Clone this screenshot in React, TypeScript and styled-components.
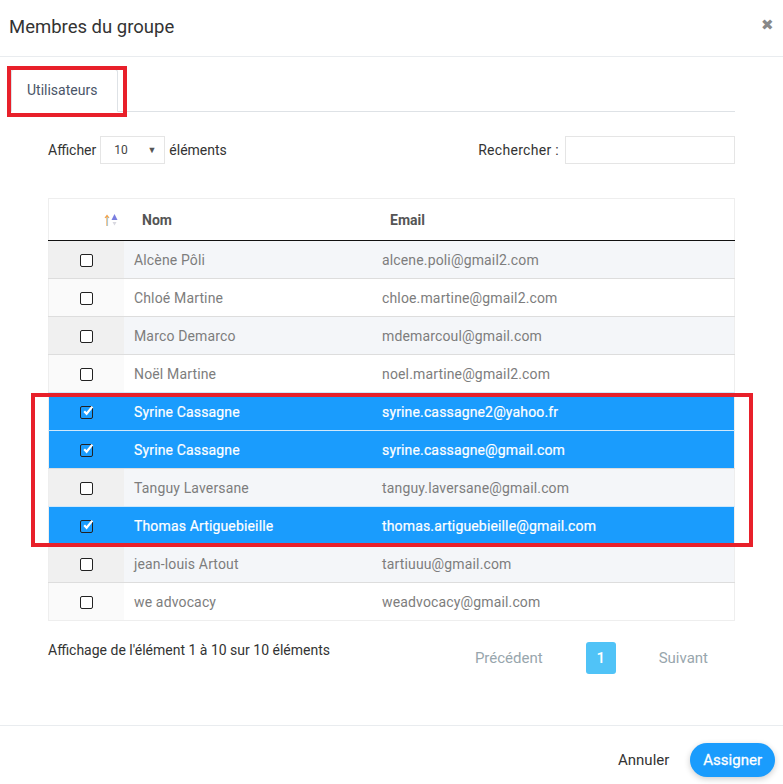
import styled, { createGlobalStyle } from "styled-components";

const users = [
  { name: "Alcène Pôli", email: "alcene.poli@gmail2.com", selected: false },
  { name: "Chloé Martine", email: "chloe.martine@gmail2.com", selected: false },
  { name: "Marco Demarco", email: "mdemarcoul@gmail.com", selected: false },
  { name: "Noël Martine", email: "noel.martine@gmail2.com", selected: false },
  { name: "Syrine Cassagne", email: "syrine.cassagne2@yahoo.fr", selected: true },
  { name: "Syrine Cassagne", email: "syrine.cassagne@gmail.com", selected: true },
  { name: "Tanguy Laversane", email: "tanguy.laversane@gmail.com", selected: false },
  { name: "Thomas Artiguebieille", email: "thomas.artiguebieille@gmail.com", selected: true },
  { name: "jean-louis Artout", email: "tartiuuu@gmail.com", selected: false },
  { name: "we advocacy", email: "weadvocacy@gmail.com", selected: false },
];

const GlobalStyle = createGlobalStyle`
  body {
    margin: 0;
    background: #fff;
    font-family: Roboto, "Liberation Sans", sans-serif;
    color: #333;
  }
`;

const SortIcon = () => (
  <svg width="16" height="16" viewBox="0 0 16 16">
    <path d="M4 14V4M2 6l2-2.5L6 6" stroke="#f0a24a" strokeWidth="1.2" fill="none" />
    <path d="M4.6 14V5" stroke="#8ec9f0" strokeWidth="0.8" />
    <path d="M8.5 8h6l-3-6z" fill="#7a7ee0" />
    <path d="M9.5 10h4l-2 3.5z" fill="#d8d8e0" />
  </svg>
);

const Check = ({ checked }) => (
  <CheckBox $checked={checked}>
    {checked && (
      <svg width="12" height="12" viewBox="0 0 12 12">
        <path d="M2.2 6.2l2.4 2.6L10.4 1.6" stroke="#fff" strokeWidth="2.2" fill="none" />
      </svg>
    )}
  </CheckBox>
);

const App = () => {
  return (
    <Modal>
      <GlobalStyle />
      <Header>
        <Title>Membres du groupe</Title>
        <Close>✖</Close>
      </Header>

      <Body>
        <Tabs>
          <Tab>Utilisateurs</Tab>
        </Tabs>

        <Content>
          <Controls>
            <Label>
              Afficher
              <Select>
                <span>10</span>
                <Caret>▼</Caret>
              </Select>
              éléments
            </Label>
            <Label $wide>
              Rechercher :
              <Search />
            </Label>
          </Controls>

          <Table>
            <thead>
              <tr>
                <HeadCell $first>
                  <SortIcon />
                </HeadCell>
                <HeadCell style={{ width: 212 }}>Nom</HeadCell>
                <HeadCell>Email</HeadCell>
              </tr>
            </thead>
            <tbody>
              {users.map((u, i) => (
                <Row key={i} $odd={i % 2 === 0} $selected={u.selected}>
                  <CheckCell>
                    <Check checked={u.selected} />
                  </CheckCell>
                  <Cell>{u.name}</Cell>
                  <Cell>{u.email}</Cell>
                </Row>
              ))}
            </tbody>
          </Table>

          <TableFooter>
            <Info>Affichage de l'élément 1 à 10 sur 10 éléments</Info>
            <Pager>
              <PageLink>Précédent</PageLink>
              <PageNumber>1</PageNumber>
              <PageLink>Suivant</PageLink>
            </Pager>
          </TableFooter>
        </Content>
      </Body>

      <Footer>
        <Cancel>Annuler</Cancel>
        <Assign>Assigner</Assign>
      </Footer>

      <Highlight style={{ left: 7, top: 66, width: 120, height: 51 }} />
      <Highlight style={{ left: 31, top: 393, width: 722, height: 154 }} />
    </Modal>
  );
};
export default App;

const Modal = styled.div`
  position: relative;
  display: flex;
  flex-direction: column;
  min-height: 784px;
  background: #fff;
`;

const Header = styled.div`
  display: flex;
  align-items: center;
  justify-content: space-between;
  height: 56px;
  padding: 0 9px 0 9px;
  border-bottom: 1px solid #e9ecef;
`;

const Title = styled.h4`
  margin: 0;
  font-size: 18.5px;
  font-weight: 400;
  color: #333;
  margin-top: -2px;
`;

const Close = styled.span`
  font-size: 15px;
  color: #888;
  margin-top: -6px;
`;

const Body = styled.div`
  flex: 1;
  padding: 12px 48px 0 11px;
`;

const Tabs = styled.div`
  display: flex;
  border-bottom: 1px solid #dee2e6;
`;

const Tab = styled.div`
  padding: 0 20px 0 15px;
  height: 41px;
  line-height: 41px;
  font-size: 14px;
  color: #4a5568;
  border: 1px solid #dee2e6;
  border-bottom: 1px solid #fff;
  border-radius: 3px 3px 0 0;
  margin-bottom: -1px;
`;

const Content = styled.div`
  padding: 24px 0 0 37px;
`;

const Controls = styled.div`
  display: flex;
  justify-content: space-between;
  align-items: center;
`;

const Label = styled.label`
  display: flex;
  align-items: center;
  gap: ${(p) => (p.$wide ? "6px" : "4px")};
  font-size: 14px;
  color: #333;
  letter-spacing: ${(p) => (p.$wide ? "0.3px" : "0")};
`;

const Select = styled.div`
  display: flex;
  align-items: center;
  justify-content: space-between;
  padding: 0 8px 0 13px;
  box-sizing: border-box;
  width: 65px;
  height: 28px;
  border: 1px solid #e5e5e5;
  font-size: 12px;
  color: #444;
`;

const Caret = styled.span`
  font-size: 9px;
  color: #555;
`;

const Search = styled.div`
  width: 170px;
  height: 28px;
  box-sizing: border-box;
  border: 1px solid #e5e5e5;
`;

const Table = styled.table`
  width: 100%;
  margin-top: 34px;
  border-collapse: collapse;
  font-size: 14px;
  border: 1px solid #eee;
`;

const HeadCell = styled.th`
  height: 41px;
  padding: 0 ${(p) => (p.$first ? "5px" : "18px")};
  text-align: ${(p) => (p.$first ? "right" : "left")};
  width: ${(p) => (p.$first ? "65px" : "auto")};
  font-weight: 700;
  color: #555;
  border-bottom: 1px solid #111;
  vertical-align: middle;
  svg {
    vertical-align: middle;
  }
`;

const Row = styled.tr`
  height: 38px;
  background: ${(p) => (p.$selected ? "#1a9cfd" : p.$odd ? "#f4f6f9" : "#fff")};
  color: ${(p) => (p.$selected ? "#fff" : "#7d7d7d")};
  -webkit-text-stroke: ${(p) => (p.$selected ? "0.2px #fff" : "0")};
  letter-spacing: 0.15px;
  td {
    border-top: 1px solid ${(p) => (p.$selected ? "#cfe8fb" : "#ddd")};
  }
  td:first-child {
    background: ${(p) => (p.$selected ? "#1a9cfd" : p.$odd ? "#f0f0f0" : "#fafafa")};
  }
`;

const CheckCell = styled.td`
  text-align: center;
  padding: 0;
`;

const Cell = styled.td`
  padding: 0 10px;
`;

const CheckBox = styled.span`
  display: inline-flex;
  align-items: center;
  justify-content: center;
  width: 11px;
  height: 11px;
  border: 1px solid #222;
  border-radius: 2px;
  background: ${(p) => (p.$checked ? "transparent" : "#fff")};
  vertical-align: middle;
  -webkit-text-stroke: 0;
  svg {
    margin: -4px -3px 0 0;
  }
`;

const TableFooter = styled.div`
  display: flex;
  justify-content: space-between;
  align-items: flex-start;
  padding-top: 21px;
`;

const Info = styled.div`
  font-size: 14px;
  color: #333;
`;

const Pager = styled.div`
  display: flex;
  align-items: center;
  gap: 43px;
  padding-right: 27px;
`;

const PageLink = styled.span`
  font-size: 15px;
  color: #98a6ad;
`;

const PageNumber = styled.span`
  display: inline-flex;
  align-items: center;
  justify-content: center;
  width: 30px;
  height: 32px;
  border-radius: 3px;
  background: #50c3f7;
  color: #fff;
  font-size: 15px;
  font-weight: 500;
`;

const Footer = styled.div`
  display: flex;
  align-items: center;
  justify-content: flex-end;
  gap: 21px;
  height: 58px;
  padding: 0 8px 0 0;
  border-top: 1px solid #e9ecef;
`;

const Cancel = styled.span`
  font-size: 15px;
  color: #333;
  margin-top: 10px;
`;

const Assign = styled.span`
  display: inline-flex;
  align-items: center;
  height: 34px;
  padding: 0 13px;
  border-radius: 17px;
  background: #1a9cfd;
  color: #fff;
  font-size: 15px;
  -webkit-text-stroke: 0.3px #fff;
  box-shadow: 0 2px 6px rgba(0, 0, 0, 0.2);
  margin-top: 10px;
`;

const Highlight = styled.div`
  position: absolute;
  box-sizing: border-box;
  border: 4px solid #e8202a;
  pointer-events: none;
`;
